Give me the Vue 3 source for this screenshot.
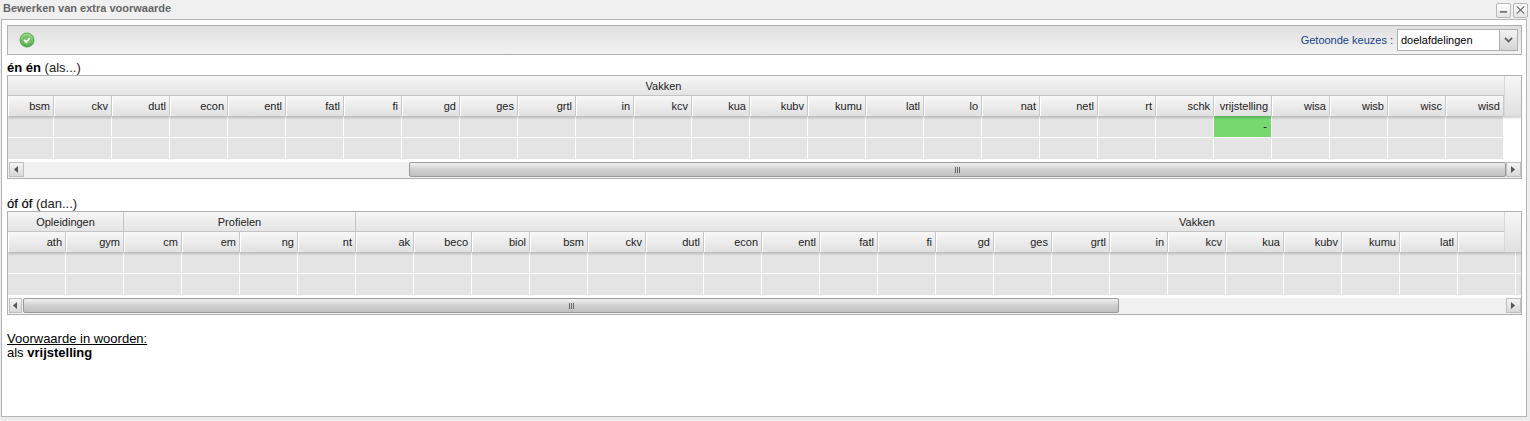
<script setup>
const cols1 = ['bsm','ckv','dutl','econ','entl','fatl','fi','gd','ges','grtl','in','kcv','kua','kubv','kumu','latl','lo','nat','netl','rt','schk','vrijstelling','wisa','wisb','wisc','wisd']
const cols2 = ['ath','gym','cm','em','ng','nt','ak','beco','biol','bsm','ckv','dutl','econ','entl','fatl','fi','gd','ges','grtl','in','kcv','kua','kubv','kumu','latl','','']
const rows = [0, 1]
</script>

<template>
  <div class="window">
    <div class="titlebar">
      <span class="title">Bewerken van extra voorwaarde</span>
      <div class="winbtns">
        <span class="winbtn"><svg width="14" height="14" viewBox="0 0 14 14"><rect x="3" y="8" width="8" height="2" fill="#777"/></svg></span>
        <span class="winbtn"><svg width="14" height="14" viewBox="0 0 14 14"><path d="M3 3l8 8M11 3l-8 8" stroke="#666" stroke-width="1.2" fill="none"/></svg></span>
      </div>
    </div>
    <div class="content">
      <div class="toolbar">
        <svg class="ok" width="16" height="16" viewBox="0 0 16 16">
          <defs>
            <linearGradient id="okg" x1="0" y1="0" x2="0" y2="1"><stop offset="0" stop-color="#a6dc96"/><stop offset="1" stop-color="#4aa845"/></linearGradient>
          </defs>
          <circle cx="8" cy="8" r="7" fill="url(#okg)" stroke="#5aa552" stroke-width="1"/>
          <circle cx="8" cy="8" r="4.6" fill="#74c468"/>
          <path d="M5.200 8l2 2 3.600-3.800" stroke="#fff" stroke-width="1.800" fill="none"/>
        </svg>
        <span class="spacer"></span>
        <span class="lbl">Getoonde keuzes :</span>
        <div class="combo">
          <span class="combo-val">doelafdelingen</span>
          <span class="combo-btn"><svg width="9" height="6" viewBox="0 0 9 6"><path d="M1 1l3.500 3.500L8 1" stroke="#666" stroke-width="1.800" fill="none"/></svg></span>
        </div>
      </div>

      <div class="heading h1"><b>én én</b> <span class="paren">(als...)</span></div>
      <div class="grid">
        <div class="hrow">
          <div class="hwrap">
            <div class="group g-full">Vakken</div>
            <div class="colrow">
              <div v-for="(c, i) in cols1" :key="c" class="hc" :class="{ first: i === 0 }">{{ c }}</div>
            </div>
          </div>
          <div class="corner"></div>
        </div>
        <div v-for="r in rows" :key="r" class="brow">
          <div v-for="(c, i) in cols1" :key="c" class="bc" :class="{ first: i === 0, on: r === 0 && c === 'vrijstelling' }">{{ r === 0 && c === 'vrijstelling' ? '-' : '' }}</div>
        </div>
        <div class="sbar">
          <span class="sbtn"><svg width="5" height="7" viewBox="0 0 5 7"><path d="M4 0v7L0 3.500z" fill="#555"/></svg></span>
          <span class="track t1"></span>
          <span class="thumb thumb1"><i></i><i></i><i></i></span>
          <span class="sbtn"><svg width="5" height="7" viewBox="0 0 5 7"><path d="M0 0v7l4-3.500z" fill="#555"/></svg></span>
        </div>
      </div>

      <div class="heading h2"><b class="nb">óf óf</b> <span class="paren">(dan...)</span></div>
      <div class="grid">
        <div class="hrow">
          <div class="hwrap">
            <div class="grouprow">
              <div class="group g-opl">Opleidingen</div>
              <div class="group g-pro">Profielen</div>
              <div class="group g-vak">Vakken</div>
            </div>
            <div class="colrow">
              <div v-for="(c, i) in cols2" :key="i" class="hc">{{ c }}</div>
            </div>
          </div>
          <div class="corner"></div>
        </div>
        <div v-for="r in rows" :key="r" class="brow">
          <div v-for="(c, i) in cols2" :key="i" class="bc"></div>
        </div>
        <div class="sbar">
          <span class="sbtn narrow"><svg width="5" height="7" viewBox="0 0 5 7"><path d="M4 0v7L0 3.500z" fill="#555"/></svg></span>
          <span class="thumb thumb2"><i></i><i></i><i></i></span>
          <span class="track"></span>
          <span class="sbtn"><svg width="5" height="7" viewBox="0 0 5 7"><path d="M0 0v7l4-3.500z" fill="#555"/></svg></span>
        </div>
      </div>

      <div class="words">
        <div class="u">Voorwaarde in woorden:</div>
        <div>als <b>vrijstelling</b></div>
      </div>
    </div>
  </div>
</template>

<style>
html, body { margin: 0; background: #ececec; overflow: hidden; }
</style>

<style scoped>
.window {
  width: 1530px;
  height: 421px;
  box-sizing: border-box;
  padding: 0 3px 4px 1px;
  display: flex;
  flex-direction: column;
  font-family: "Liberation Sans", Arial, sans-serif;
  background: linear-gradient(#f0f0f0, #ececec);
}
.titlebar {
  height: 19px;
  flex: none;
  display: flex;
  align-items: center;
  justify-content: space-between;
  margin-right: -3px;
}
.title {
  font-size: 11px;
  font-weight: bold;
  color: #666;
  padding: 0 0 4px 2px;
}
.winbtns { display: flex; gap: 2px; padding-right: 2px; margin-top: 1px; }
.winbtn {
  width: 13px;
  height: 13px;
  border: 1px solid #b8b8b8;
  border-radius: 2px;
  background: linear-gradient(#fff, #e4e4e4);
  display: flex;
  align-items: center;
  justify-content: center;
  overflow: hidden;
}
.content {
  flex: 1;
  min-height: 0;
  background: #fff;
  border: 1px solid #b5b5b5;
  padding: 5px 5px 0 5px;
  overflow: hidden;
  width: 1526px;
  box-sizing: border-box;
}
.toolbar {
  width: 1515px;
  height: 30px;
  box-sizing: border-box;
  border: 1px solid #b0b0b0;
  background: linear-gradient(#e0e0e0, #f2f2f2);
  display: flex;
  align-items: center;
  padding: 0 3px 0 11px;
}
.ok { flex: none; }
.spacer { flex: 1; }
.lbl { font-size: 11px; color: #15428b; margin-right: 4px; }
.combo {
  width: 121px;
  height: 22px;
  box-sizing: border-box;
  border: 1px solid #b0b0b0;
  background: #fff;
  display: flex;
  align-items: center;
}
.combo-val { flex: 1; font-size: 11px; color: #000; padding-left: 3px; }
.combo-btn {
  width: 17px;
  height: 20px;
  border-left: 1px solid #b0b0b0;
  background: linear-gradient(#f2f2f2, #d4d4d4);
  display: flex;
  align-items: center;
  justify-content: center;
}
.heading { font-size: 13px; line-height: 14px; color: #000; }
.paren { color: #222; }
.h1 { margin-top: 6px; height: 14px; }
.h2 { margin-top: 18px; height: 14px; }
.nb { font-weight: normal; -webkit-text-stroke: 0.2px #000; }
.grid {
  width: 1515px;
  height: 104px;
  box-sizing: border-box;
  border: 1px solid #b0b0b0;
  overflow: hidden;
  background: #fff;
  display: flex;
  flex-direction: column;
}
.hrow {
  display: flex;
  height: 40px;
  flex: none;
  box-shadow: 0 2px 2px rgba(0, 0, 0, 0.18);
  position: relative;
  z-index: 1;
}
.hwrap { flex: 1; min-width: 0; overflow: hidden; }
.corner {
  width: 17px;
  flex: none;
  box-sizing: border-box;
  border-left: 1px solid #d8d8d8;
  background: linear-gradient(#f6f6f6, #e0e0e0);
}
.group {
  height: 20px;
  box-sizing: border-box;
  border-bottom: 1px solid #c4c4c4;
  background: linear-gradient(#f6f6f6, #e4e4e4);
  font-size: 11px;
  line-height: 21px;
  text-align: center;
  color: #222;
}
.g-full { padding-right: 185px; }
.grouprow { display: flex; }
.g-opl { width: 116px; border-right: 1px solid #c4c4c4; flex: none; }
.g-pro { width: 232px; border-right: 1px solid #c4c4c4; flex: none; }
.g-vak { width: 1682px; flex: none; }
.colrow { display: flex; height: 20px; }
.hc {
  width: 58px;
  flex: none;
  box-sizing: border-box;
  border-right: 1px solid #c8c8c8;
  border-left: 1px solid #fff;
  background: linear-gradient(#f8f8f8, #e0e0e0);
  font-size: 11px;
  line-height: 21px;
  text-align: right;
  padding-right: 3px;
  color: #222;
  white-space: nowrap;
}
.hc.first { width: 46px; }
.brow { display: flex; height: 22px; flex: none; overflow: hidden; }
.bc {
  width: 58px;
  height: 21px;
  flex: none;
  box-sizing: border-box;
  border-right: 1px solid #fff;
  background: #e4e4e4;
  font-size: 11px;
  line-height: 21px;
  text-align: right;
  padding-right: 4px;
}
.bc.first { width: 46px; }
.bc.on { background: #75d970; color: #111; }
.sbar {
  height: 16px;
  flex: none;
  box-sizing: border-box;
  margin-top: 2px;
  padding: 0 0 1px 1px;
  display: flex;
  align-items: stretch;
  background: #f0f0f0;
}
.sbtn {
  width: 15px;
  flex: none;
  box-sizing: border-box;
  border: 1px solid #c0c0c0;
  background: linear-gradient(#f4f4f4, #d8d8d8);
  display: flex;
  align-items: center;
  justify-content: center;
}
.sbtn.narrow { width: 13px; margin-right: 1px; }
.track { flex: 1; min-width: 0; }
.t1 { flex: none; width: 385px; }
.thumb {
  box-sizing: border-box;
  border: 1px solid #999;
  border-radius: 2px;
  background: linear-gradient(#f0f0f0, #d0d0d0 50%, #c0c0c0);
  display: flex;
  align-items: center;
  justify-content: center;
  gap: 1px;
  flex: none;
}
.thumb1 { width: 1097px; }
.thumb2 { width: 1096px; }
.thumb i { width: 1px; height: 6px; background: #666; }
.words {
  margin-top: 17px;
  font-size: 13px;
  line-height: 14px;
  color: #000;
}
.u { text-decoration: underline; }
</style>
